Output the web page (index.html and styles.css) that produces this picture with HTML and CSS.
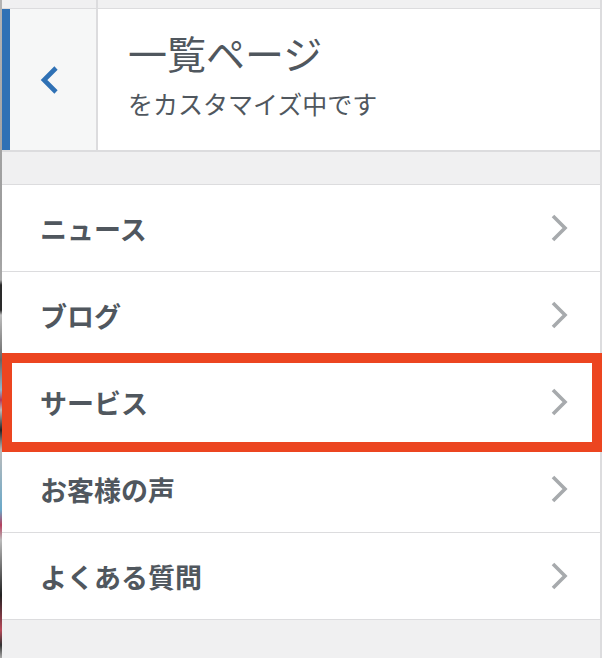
FILE: index.html
```html
<!DOCTYPE html>
<html lang="ja">
<head>
  <meta charset="utf-8">
  <title>一覧ページ</title>
  <link rel="stylesheet" href="styles.css">
</head>
<body>
  <div class="page">
    <div class="site-strip"></div>

    <div class="panel">
      <div class="panel-top">
        <div class="panel-top-left"></div>
      </div>

      <div class="info">
        <button class="back-btn" aria-label="戻る">
          <svg width="19" height="30" viewBox="0 0 19 30">
            <path d="M16 3 L4 15 L16 27" fill="none" stroke="#2f71b5" stroke-width="4.6"/>
          </svg>
        </button>
        <div class="title-area">
          <div class="title">一覧ページ</div>
          <div class="subtitle">をカスタマイズ中です</div>
        </div>
      </div>

      <div class="gap"></div>

      <ul class="menu">
        <li class="menu-item"><span>ニュース</span><svg class="chev" width="17" height="28" viewBox="0 0 17 28"><path d="M2 2 L14 14 L2 26" fill="none" stroke="#a7aaad" stroke-width="3.6"/></svg></li>
        <li class="menu-item"><span>ブログ</span><svg class="chev" width="17" height="28" viewBox="0 0 17 28"><path d="M2 2 L14 14 L2 26" fill="none" stroke="#a7aaad" stroke-width="3.6"/></svg></li>
        <li class="menu-item"><span>サービス</span><svg class="chev" width="17" height="28" viewBox="0 0 17 28"><path d="M2 2 L14 14 L2 26" fill="none" stroke="#a7aaad" stroke-width="3.6"/></svg></li>
        <li class="menu-item"><span>お客様の声</span><svg class="chev" width="17" height="28" viewBox="0 0 17 28"><path d="M2 2 L14 14 L2 26" fill="none" stroke="#a7aaad" stroke-width="3.6"/></svg></li>
        <li class="menu-item"><span>よくある質問</span><svg class="chev" width="17" height="28" viewBox="0 0 17 28"><path d="M2 2 L14 14 L2 26" fill="none" stroke="#a7aaad" stroke-width="3.6"/></svg></li>
      </ul>

      <div class="panel-bottom"></div>
    </div>

    <!-- annotation box around the "サービス" row -->
    <div class="highlight"></div>
  </div>
</body>
</html>
```

FILE: styles.css
```css
/* Base */
body {
  margin: 0;
  font-family: "Noto Sans CJK JP", "Noto Sans", sans-serif;
  color: #50575e;
  background: #fff;
}

.page {
  position: relative;
  display: flex;
  width: 602px;
  height: 658px;
  overflow: hidden;
}

/* Sliver of the site preview on the left */
.site-strip {
  width: 2px;
  flex: none;
  background: linear-gradient(to bottom,
    #b4b4b4 0, #9a9a9a 230px, #a8a8a8 280px, #2a2a2a 285px, #2a2a2a 310px,
    #bdbdbd 315px, #666 360px, #8fb7cf 390px, #b03a5a 400px, #bbb 410px,
    #222 430px, #bbb 450px, #6aa8c8 510px, #b5405e 525px, #bbb 540px,
    #222 595px, #b94a5a 630px, #333 645px, #aaa 658px);
}

/* Customizer panel */
.panel {
  flex: 1;
  display: flex;
  flex-direction: column;
  border-right: 2px solid #dcdcde;
  background: #f0f0f1;
}

.panel-top {
  height: 8px;
  border-bottom: 1px solid #dcdcde;
  background: #f0f0f1;
}

.panel-top-left {
  width: 94px;
  height: 100%;
  border-right: 2px solid #dcdcde;
}

/* Section header */
.info {
  display: flex;
  height: 141px;
  background: #fff;
  border-bottom: 2px solid #dcdcde;
}

.back-btn {
  width: 96px;
  flex: none;
  display: flex;
  align-items: center;
  justify-content: center;
  padding: 0 8px 0 0;
  margin: 0;
  background: #f6f7f7;
  border: none;
  border-left: 8px solid #2f71b5;
  border-right: 2px solid #dcdcde;
  box-sizing: border-box;
}

.title-area {
  padding: 19px 0 0 30px;
}

.title {
  font-size: 39px;
  line-height: 48px;
  font-weight: 400;
}

.subtitle {
  margin-top: 12px;
  font-size: 25px;
  line-height: 30px;
}

.gap {
  height: 32px;
}

/* Menu list */
.menu {
  list-style: none;
  margin: 0;
  padding: 0;
  background: #fff;
}

.menu-item {
  display: flex;
  align-items: center;
  justify-content: space-between;
  height: 86px;
  padding: 0 32px 0 38px;
  border-top: 1px solid #dcdcde;
  font-size: 27px;
  font-weight: 700;
}

.menu-item:last-child {
  border-bottom: 1px solid #dcdcde;
}

.chev {
  flex: none;
}

.panel-bottom {
  flex: 1;
}

/* Red annotation frame */
.highlight {
  position: absolute;
  left: 2px;
  top: 353px;
  width: 600px;
  height: 99px;
  border: 10px solid #ec4520;
  box-sizing: border-box;
}
```
